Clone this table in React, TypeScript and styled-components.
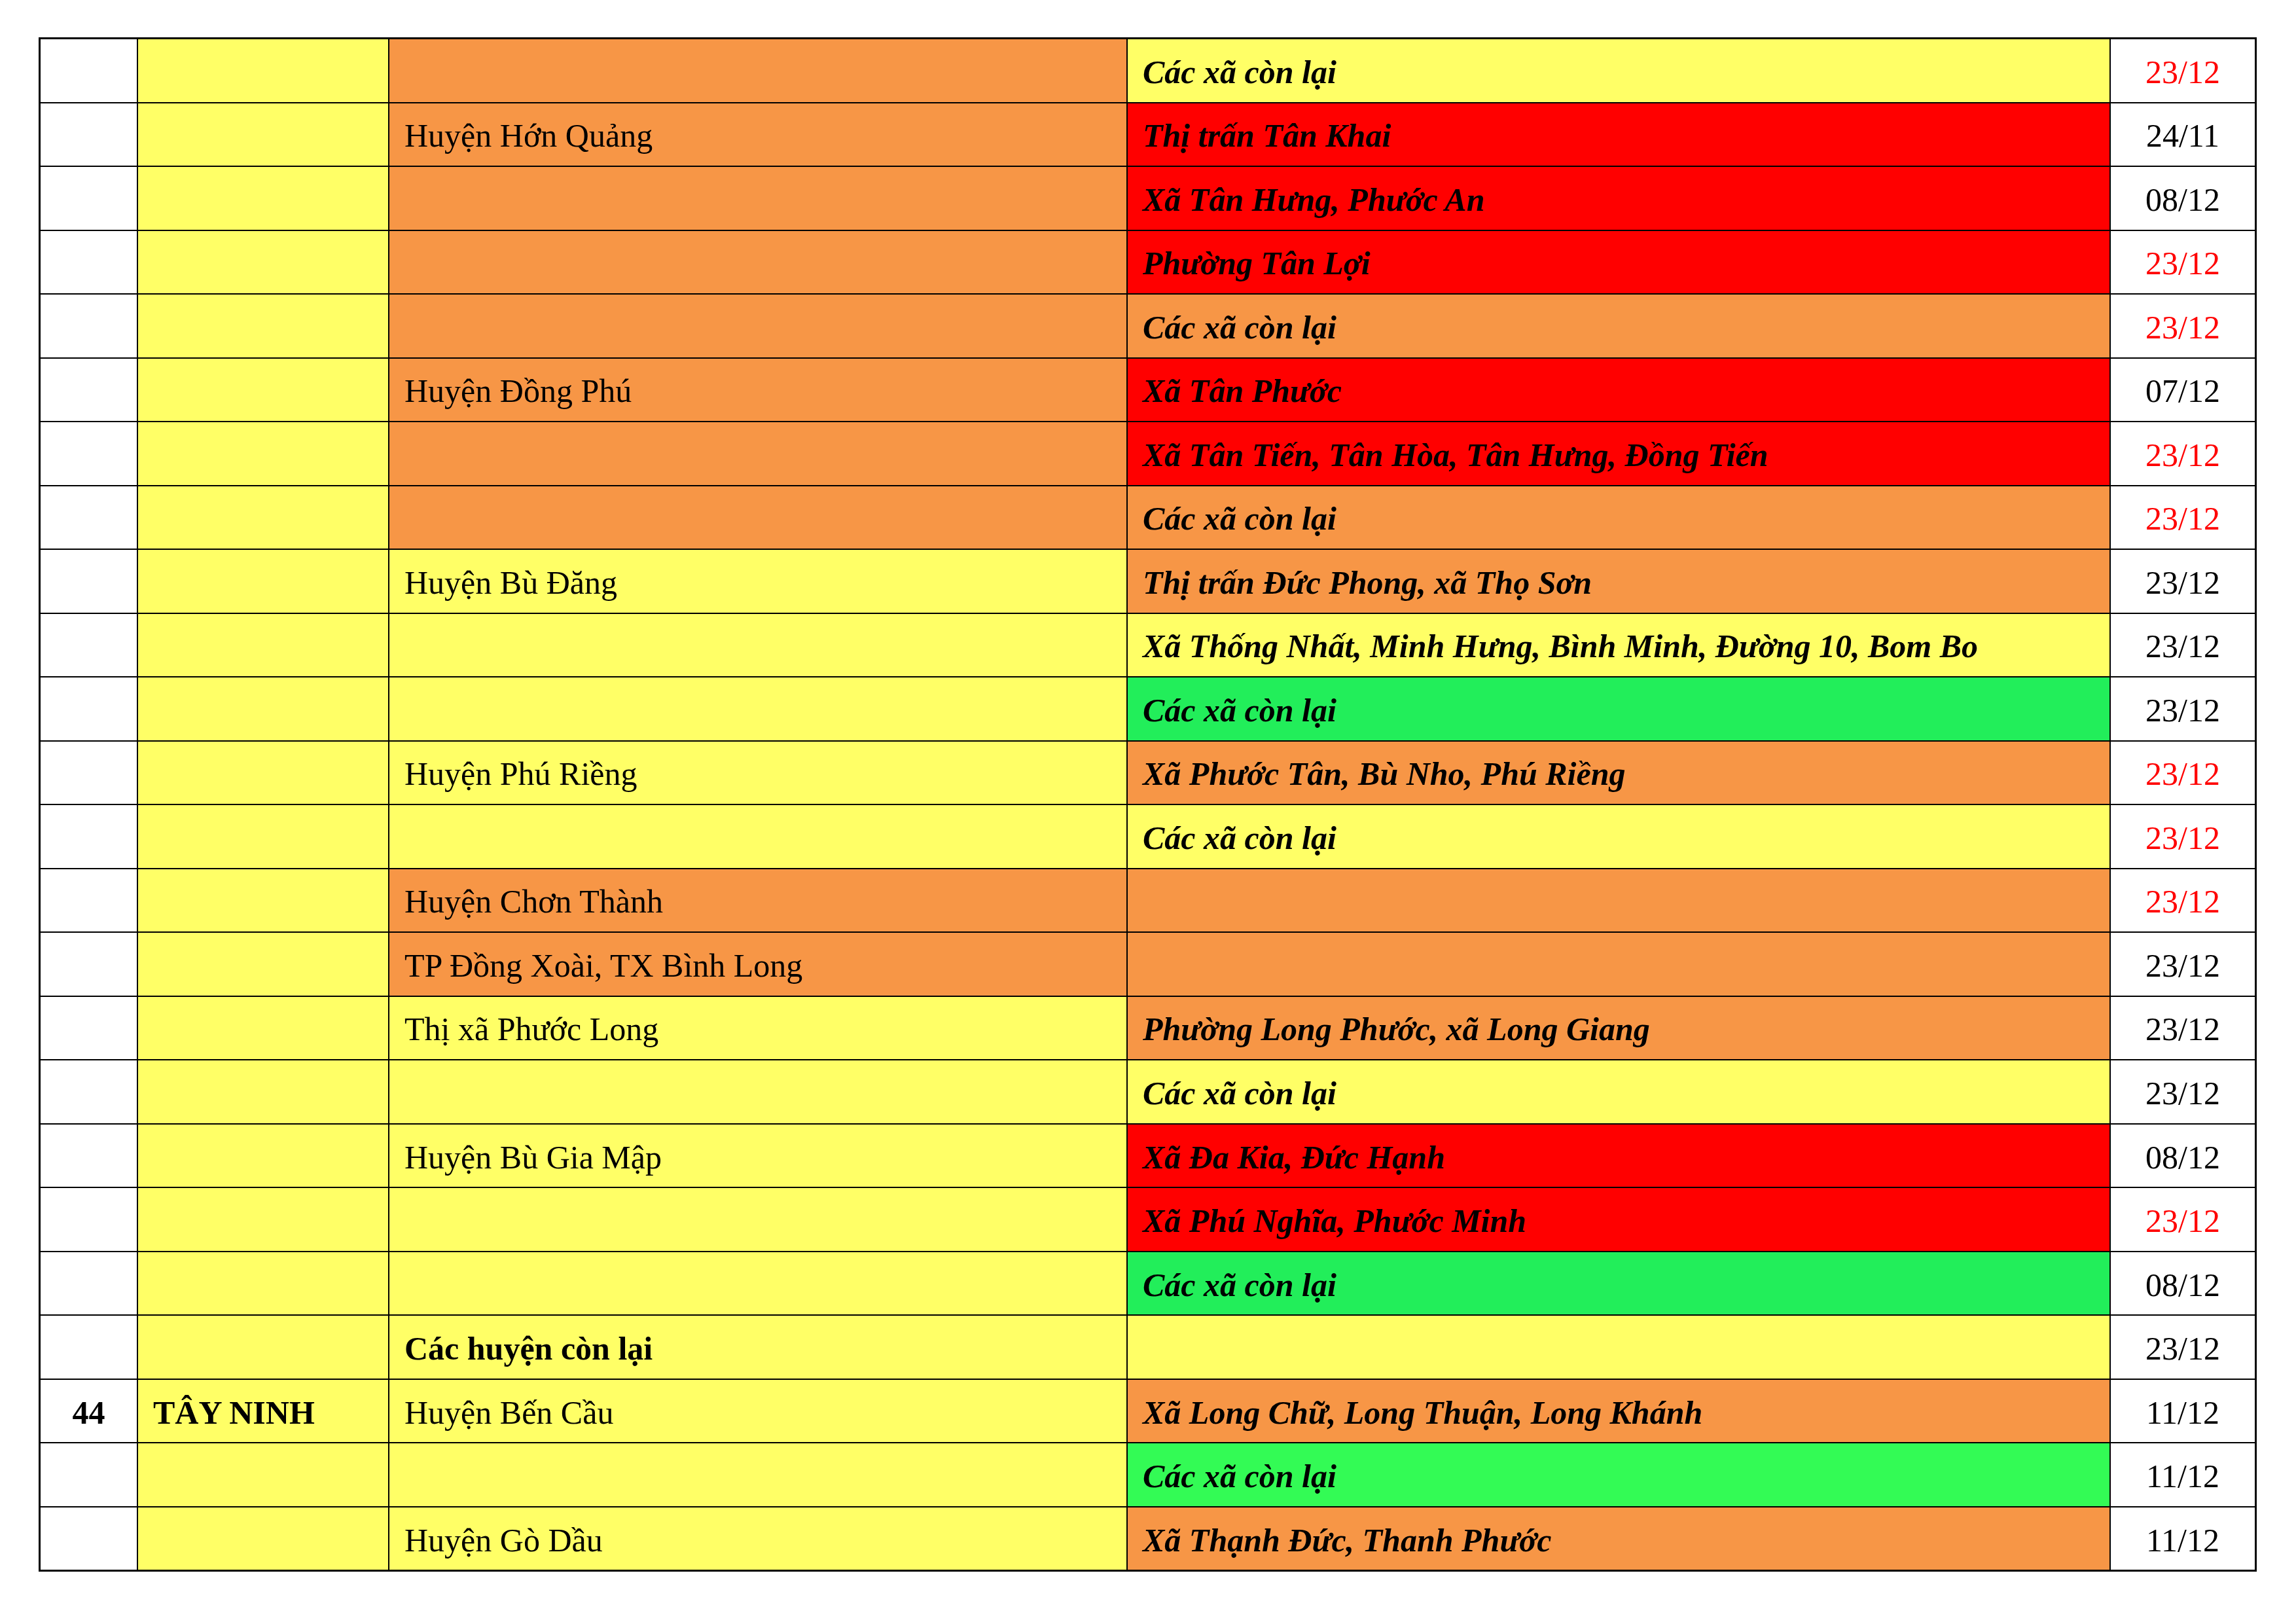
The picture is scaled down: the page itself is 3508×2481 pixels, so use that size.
import React from "react";
import styled, { createGlobalStyle } from "styled-components";

const GlobalStyle = createGlobalStyle`
  html, body {
    margin: 0;
    padding: 0;
    background: #ffffff;
  }
  body {
    width: 3508px;
    height: 2481px;
    overflow: hidden;
    font-family: "Liberation Serif", "Times New Roman", serif;
  }
`;

type Fill = "white" | "yellow" | "orange" | "red" | "green" | "green2";

const fills: Record<Fill, string> = {
  white: "#ffffff",
  yellow: "#ffff66",
  orange: "#f79646",
  red: "#ff0000",
  green: "#22ee5a",
  green2: "#33fb55",
};

const Page = styled.div`
  padding: 57px 0 0 59px;
`;

const Grid = styled.div`
  display: grid;
  width: 3389px;
  box-sizing: border-box;
  grid-template-columns: 147px 382px 1126px 1500px 220px;
  grid-auto-rows: 95.52px;
  gap: 2px;
  background: #000000;
  border: 3px solid #000000;
`;

const Cell = styled.div<{ $fill: Fill; $align?: "left" | "center" }>`
  display: flex;
  align-items: center;
  justify-content: ${(p) => (p.$align === "center" ? "center" : "flex-start")};
  padding: 4px 0 0 ${(p) => (p.$align === "center" ? "0" : "23px")};
  box-sizing: border-box;
  background: ${(p) => fills[p.$fill]};
  font-size: 50px;
  color: #000000;
  white-space: nowrap;
  overflow: hidden;
`;

const Plain = styled.span<{ $bold?: boolean }>`
  font-weight: ${(p) => (p.$bold ? 700 : 400)};
`;

const Commune = styled.span`
  font-weight: 700;
  font-style: italic;
`;

const DateText = styled.span<{ $red?: boolean }>`
  color: ${(p) => (p.$red ? "#ff0000" : "#000000")};
`;

type Row = {
  no?: string;
  province?: string;
  district?: string;
  districtBold?: boolean;
  districtFill: Fill;
  commune?: string;
  communeFill: Fill;
  date: string;
  red?: boolean;
};

const rows: Row[] = [
  { districtFill: "orange", commune: "Các xã còn lại", communeFill: "yellow", date: "23/12", red: true },
  { district: "Huyện Hớn Quảng", districtFill: "orange", commune: "Thị trấn Tân Khai", communeFill: "red", date: "24/11" },
  { districtFill: "orange", commune: "Xã Tân Hưng, Phước An", communeFill: "red", date: "08/12" },
  { districtFill: "orange", commune: "Phường Tân Lợi", communeFill: "red", date: "23/12", red: true },
  { districtFill: "orange", commune: "Các xã còn lại", communeFill: "orange", date: "23/12", red: true },
  { district: "Huyện Đồng Phú", districtFill: "orange", commune: "Xã Tân Phước", communeFill: "red", date: "07/12" },
  { districtFill: "orange", commune: "Xã Tân Tiến, Tân Hòa, Tân Hưng, Đồng Tiến", communeFill: "red", date: "23/12", red: true },
  { districtFill: "orange", commune: "Các xã còn lại", communeFill: "orange", date: "23/12", red: true },
  { district: "Huyện Bù Đăng", districtFill: "yellow", commune: "Thị trấn Đức Phong, xã Thọ Sơn", communeFill: "orange", date: "23/12" },
  { districtFill: "yellow", commune: "Xã Thống Nhất, Minh Hưng, Bình Minh, Đường 10, Bom Bo", communeFill: "yellow", date: "23/12" },
  { districtFill: "yellow", commune: "Các xã còn lại", communeFill: "green", date: "23/12" },
  { district: "Huyện Phú Riềng", districtFill: "yellow", commune: "Xã Phước Tân, Bù Nho, Phú Riềng", communeFill: "orange", date: "23/12", red: true },
  { districtFill: "yellow", commune: "Các xã còn lại", communeFill: "yellow", date: "23/12", red: true },
  { district: "Huyện Chơn Thành", districtFill: "orange", communeFill: "orange", date: "23/12", red: true },
  { district: "TP Đồng Xoài, TX Bình Long", districtFill: "orange", communeFill: "orange", date: "23/12" },
  { district: "Thị xã Phước Long", districtFill: "yellow", commune: "Phường Long Phước, xã Long Giang", communeFill: "orange", date: "23/12" },
  { districtFill: "yellow", commune: "Các xã còn lại", communeFill: "yellow", date: "23/12" },
  { district: "Huyện Bù Gia Mập", districtFill: "yellow", commune: "Xã Đa Kia, Đức Hạnh", communeFill: "red", date: "08/12" },
  { districtFill: "yellow", commune: "Xã Phú Nghĩa, Phước Minh", communeFill: "red", date: "23/12", red: true },
  { districtFill: "yellow", commune: "Các xã còn lại", communeFill: "green", date: "08/12" },
  { district: "Các huyện còn lại", districtBold: true, districtFill: "yellow", communeFill: "yellow", date: "23/12" },
  { no: "44", province: "TÂY NINH", district: "Huyện Bến Cầu", districtFill: "yellow", commune: "Xã Long Chữ, Long Thuận, Long Khánh", communeFill: "orange", date: "11/12" },
  { districtFill: "yellow", commune: "Các xã còn lại", communeFill: "green2", date: "11/12" },
  { district: "Huyện Gò Dầu", districtFill: "yellow", commune: "Xã Thạnh Đức, Thanh Phước", communeFill: "orange", date: "11/12" },
];

export default function App() {
  return (
    <>
      <GlobalStyle />
      <Page>
        <Grid>
          {rows.map((r, i) => (
            <React.Fragment key={i}>
              <Cell $fill="white" $align="center">
                {r.no && <Plain $bold>{r.no}</Plain>}
              </Cell>
              <Cell $fill="yellow">
                {r.province && <Plain $bold>{r.province}</Plain>}
              </Cell>
              <Cell $fill={r.districtFill}>
                {r.district && <Plain $bold={r.districtBold}>{r.district}</Plain>}
              </Cell>
              <Cell $fill={r.communeFill}>
                {r.commune && <Commune>{r.commune}</Commune>}
              </Cell>
              <Cell $fill="white" $align="center">
                <DateText $red={r.red}>{r.date}</DateText>
              </Cell>
            </React.Fragment>
          ))}
        </Grid>
      </Page>
    </>
  );
}
